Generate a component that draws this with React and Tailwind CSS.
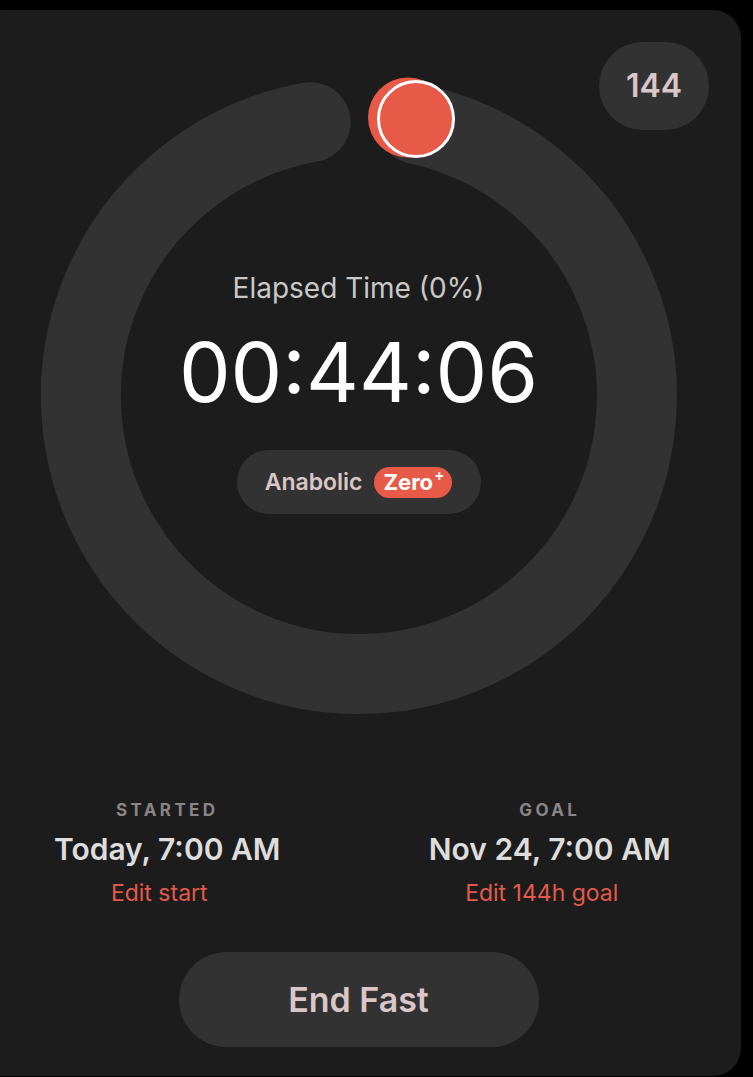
const font = { fontFamily: "Inter, 'Noto Sans', sans-serif" };

function Ring() {
  // ring drawn as an svg arc: stroke 80, mid radius 278, centre (318, 318)
  return (
    <svg className="absolute inset-0 overflow-visible" width="636" height="636" viewBox="0 0 636 636">
      <path
        d="M 375.8 46.1 A 278 278 0 1 1 269.7 44.2"
        fill="none"
        stroke="#323232"
        strokeWidth="80"
        strokeLinecap="round"
      />
      <circle cx="367" cy="39.5" r="40" fill="#e75a48" />
      <circle cx="375" cy="41" r="37.5" fill="#e75a48" stroke="#ffffff" strokeWidth="3" />
    </svg>
  );
}

function Stat({ label, value, edit }) {
  return (
    <div className="flex flex-col items-center">
      <div className="text-[17px] leading-[20px] font-bold tracking-[0.2em] text-[#8a8587]">{label}</div>
      <div className="mt-[11px] text-[30px] leading-[36px] font-semibold text-[#dddddd]">{value}</div>
      <div className="mt-[12px] mr-[16px] text-[23px] leading-[28px] text-[#e35a4a]">{edit}</div>
    </div>
  );
}

export default function App() {
  return (
    <div className="min-h-screen overflow-hidden bg-black" style={font}>
      <div className="relative ml-[-24px] mt-[10px] h-[1066px] w-[765px] rounded-[28px] bg-[#1c1c1c] pt-[68px]">
        <div className="absolute right-[32px] top-[32px] flex h-[88px] w-[110px] items-center justify-center rounded-full bg-[#323232] text-[32px] font-semibold text-[#d9c6c8]">
          144
        </div>

        <div className="relative mx-auto h-[636px] w-[636px]">
          <Ring />
          <div className="relative flex flex-col items-center pt-[194px]">
            <div className="text-[28px] leading-[32px] text-[#c9c9c9]">Elapsed Time (0%)</div>
            <div className="mt-[25px] text-[82px] leading-[88px] text-white">00:44:06</div>
            <div className="mt-[33px] flex h-[64px] w-[244px] items-center justify-center gap-[12px] rounded-full bg-[#323232]">
              <span className="text-[23px] font-semibold text-[#d9c6c8]">Anabolic</span>
              <span className="flex h-[31px] items-center rounded-full bg-[#e75a48] pl-[9px] pr-[8px] text-[22px] font-bold text-white">
                Zero<sup className="ml-[1px] text-[15px] leading-none">+</sup>
              </span>
            </div>
          </div>
        </div>

        <div className="mt-[86px] grid grid-cols-2">
          <Stat label="STARTED" value="Today, 7:00 AM" edit="Edit start" />
          <Stat label="GOAL" value="Nov 24, 7:00 AM" edit="Edit 144h goal" />
        </div>

        <div className="mt-[45px] flex justify-center">
          <button className="h-[95px] w-[360px] rounded-full bg-[#323232] text-[34px] font-semibold text-[#d9c6c8]">
            End Fast
          </button>
        </div>
      </div>
    </div>
  );
}
